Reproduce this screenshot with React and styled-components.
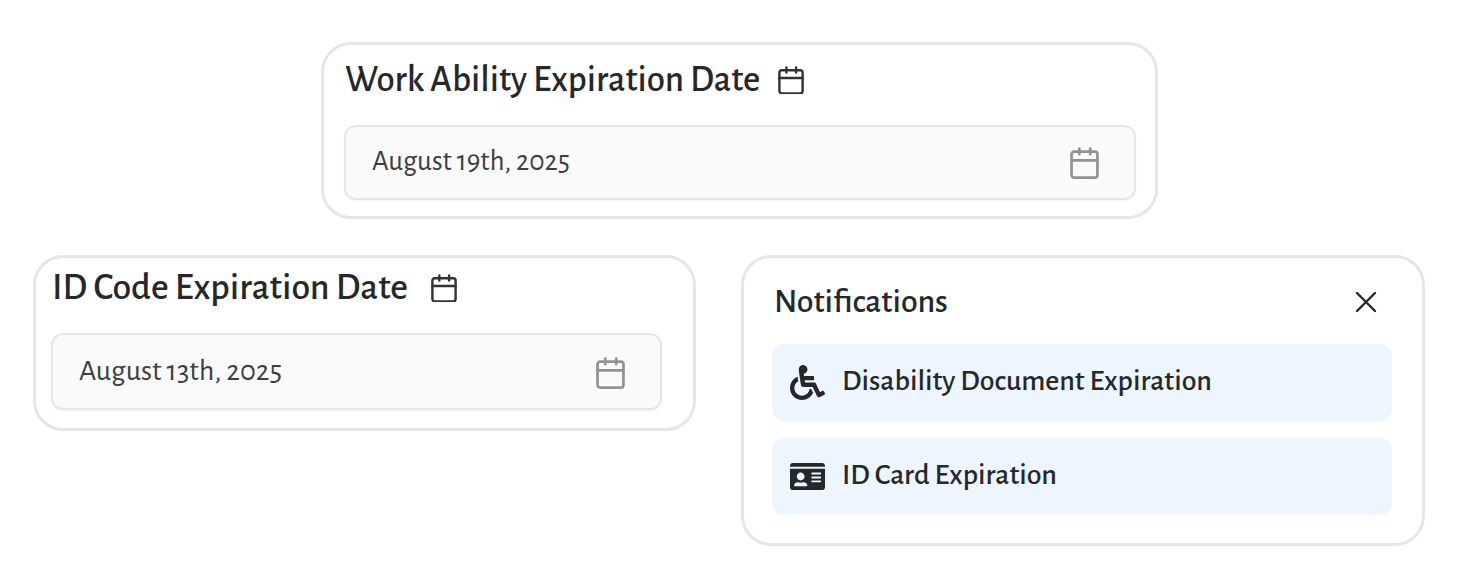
import React, { useState } from 'react'
import styled, { createGlobalStyle } from 'styled-components'
import { FaWheelchair, FaIdCard } from 'react-icons/fa'

//STYLING
const GlobalStyle = createGlobalStyle`
* {
  box-sizing: border-box;
}
body {
  margin: 0;
  background: #ffffff;
  color: #25282a;
  font-family: 'Alegreya Sans', Lato, 'Open Sans', sans-serif;
  font-variant-numeric: oldstyle-nums;
}
button {
  font: inherit;
  font-variant-numeric: inherit;
  color: inherit;
  cursor: pointer;
}
`

const Page = styled.main`
display: flex;
flex-direction: column;
gap: 36px;
padding: 42px 33px;
`

const TopRow = styled.div`
display: grid;
grid-template-columns: 288fr 837fr 267fr;
`

const BottomRow = styled.div`
display: grid;
grid-template-columns: 663fr 684fr;
gap: 45px;
align-items: start;
`

const Card = styled.section`
border: 3px solid #e6e6e6;
border-radius: 30px;
background: #ffffff;
`

const DateCardWrapper = styled(Card)`
grid-column: ${props => props.$column || 'auto'};
padding: ${props => props.$padding};
`

const DateHeader = styled.div`
display: flex;
align-items: center;
gap: ${props => props.$gap}px;
padding-left: 1px;
margin-bottom: 25px;
`

const DateTitle = styled.h2`
margin: 0;
font-size: ${props => props.$size}px;
line-height: 40px;
font-weight: 500;
`

const DateField = styled.button`
display: flex;
align-items: flex-end;
justify-content: space-between;
width: 100%;
padding: 18px 35px 19px 26px;
border: 2px solid #e6e6e6;
border-radius: 12px;
background: #fafafa;
box-shadow: 0 1px 2px rgba(0, 0, 0, 0.06);
text-align: left;
`

const DateText = styled.span`
font-size: ${props => props.$size}px;
line-height: ${props => props.$line}px;
color: #3c3f42;
`

const NotificationCard = styled(Card)`
padding: 24px 30px 28px 28px;
`

const NotificationHeader = styled.div`
display: flex;
align-items: center;
justify-content: space-between;
padding: 0 15px 0 2px;
margin-bottom: 22px;
`

const NotificationTitle = styled.h2`
margin: 0;
font-size: 34px;
line-height: 40px;
font-weight: 500;
`

const CloseButton = styled.button`
display: flex;
padding: 0;
border: none;
background: none;
`

const NotificationList = styled.ul`
display: flex;
flex-direction: column;
gap: 17px;
margin: 0;
padding: 0;
list-style: none;
`

const NotificationItem = styled.li`
display: flex;
align-items: center;
gap: 17px;
padding: 19px 18px;
border-radius: 12px;
background: #edf5ff;
font-size: 30px;
line-height: 36px;
font-weight: 500;
`

const NotificationText = styled.span`
padding-bottom: 3px;
`

//ICONS
const CalendarIcon = ({ width, color, stroke }) => (
  <svg width={width} viewBox="0 0 28 31" fill="none" stroke={color} strokeWidth={stroke} strokeLinecap="round" aria-hidden="true">
    <rect x="1.5" y="4.5" width="25" height="25" rx="2.5" />
    <path d="M1.5 13H26.5M9 1.5V7M19.5 1.5V7" />
  </svg>
)

const CloseIcon = () => (
  <svg width="22" height="22" viewBox="0 0 22 22" fill="none" stroke="#25282a" strokeWidth="2.4" strokeLinecap="round" aria-hidden="true">
    <path d="M2 2L20 20M20 2L2 20" />
  </svg>
)

const notifications = [
  { text: 'Disability Document Expiration', Icon: FaWheelchair },
  { text: 'ID Card Expiration', Icon: FaIdCard }
]

function DateCard({ id, title, date, column, padding, gap, titleSize, dateSize, dateLine }) {
  return (
    <DateCardWrapper $column={column} $padding={padding}>
      <DateHeader $gap={gap}>
        <DateTitle id={`${id}-title`} $size={titleSize}>{title}</DateTitle>
        <CalendarIcon width={26} color="#303336" stroke={2.6} />
      </DateHeader>
      <DateField type="button" aria-labelledby={`${id}-title ${id}-date`}>
        <DateText id={`${id}-date`} $size={dateSize} $line={dateLine}>{date}</DateText>
        <CalendarIcon width={29} color="#929292" stroke={2.6} />
      </DateField>
    </DateCardWrapper>
  )
}

export default function App() {
  const [showNotifications, setShowNotifications] = useState(true)

  return (
    <>
      <GlobalStyle />
      <Page>
        <TopRow>
          <DateCard
            id="work"
            title="Work Ability Expiration Date"
            date="August 19th, 2025"
            column="2"
            padding="15px 19px 16px 20px"
            gap={18}
            titleSize={37}
            dateSize={29}
            dateLine={34}
          />
        </TopRow>
        <BottomRow>
          <DateCard
            id="code"
            title="ID Code Expiration Date"
            date="August 13th, 2025"
            padding="10px 31px 18px 15px"
            gap={23}
            titleSize={38}
            dateSize={30}
            dateLine={36}
          />
          {showNotifications && (
            <NotificationCard aria-labelledby="notifications-title">
              <NotificationHeader>
                <NotificationTitle id="notifications-title">Notifications</NotificationTitle>
                <CloseButton type="button" aria-label="Close" onClick={() => setShowNotifications(false)}>
                  <CloseIcon />
                </CloseButton>
              </NotificationHeader>
              <NotificationList>
                {notifications.map(({ text, Icon }) => (
                  <NotificationItem key={text}>
                    <Icon size={35} aria-hidden="true" />
                    <NotificationText>{text}</NotificationText>
                  </NotificationItem>
                ))}
              </NotificationList>
            </NotificationCard>
          )}
        </BottomRow>
      </Page>
    </>
  )
}
